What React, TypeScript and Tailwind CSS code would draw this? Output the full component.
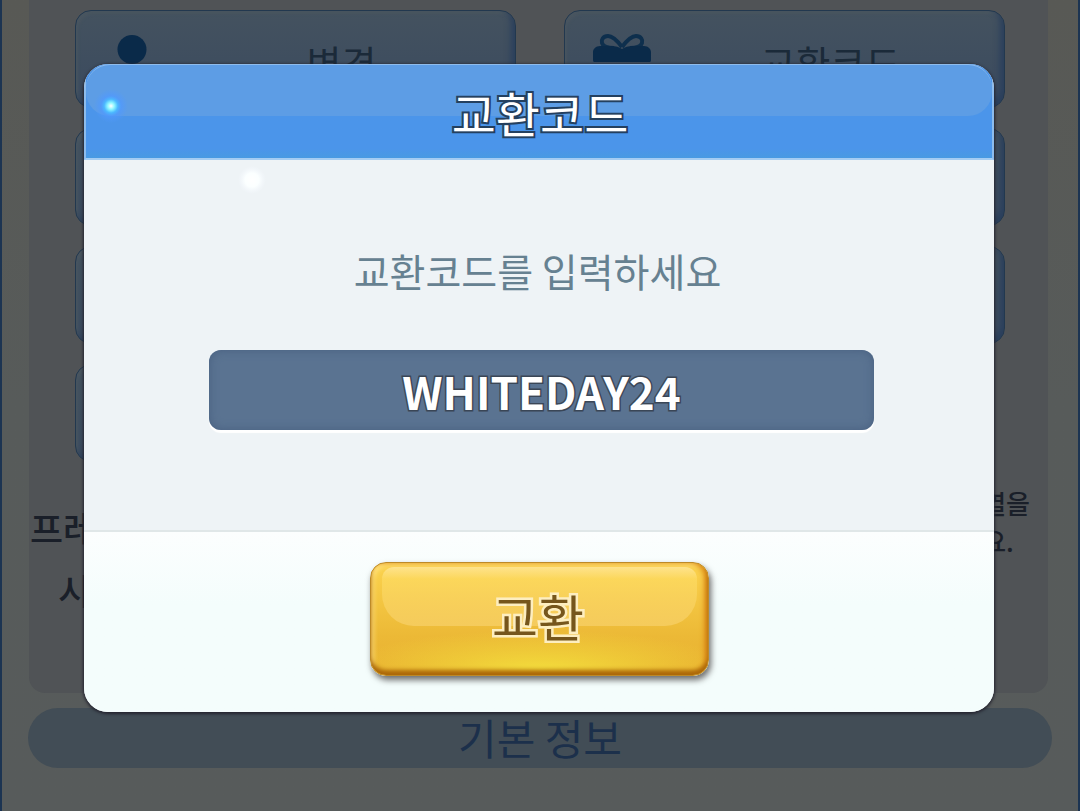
import { useState } from "react";

const FONT = "font-['Noto_Sans_CJK_KR',sans-serif]";

const UserIcon = () => (
  <svg viewBox="0 0 60 64" className="h-16 w-[60px] fill-[#0a2a49]">
    <circle cx="30" cy="14.5" r="14.5" />
    <path d="M4 64V56c0-12 10-20 26-20s26 8 26 20v8z" />
  </svg>
);

const GiftIcon = () => (
  <svg viewBox="0 0 60 64" className="h-16 w-[60px] overflow-visible">
    <g fill="none" stroke="#0e2f4d" strokeWidth="4">
      <path d="M31 12C25 4 21 1 17 1c-5 0-7 4-6 7 1 4 6 5 12 5" />
      <path d="M31 12C37 4 41 1 45 1c5 0 7 4 6 7-1 4-6 5-12 5" />
    </g>
    <path
      d="M2 25V17c0-3 3-6 7-6h11c5 0 8 1 11 3 3-2 6-3 11-3h11c4 0 7 3 7 6v8c0 2-1 2-2 2H4c-1 0-2 0-2-2z"
      fill="#0a2a49"
    />
    <path d="M6 32h50v28H6z" fill="#0a2a49" />
  </svg>
);

type MenuItem = { label: string; icon?: React.ReactNode };

const leftMenu: MenuItem[] = [
  { label: "변경", icon: <UserIcon /> },
  { label: "" },
  { label: "" },
  { label: "" },
];

const rightMenu: MenuItem[] = [
  { label: "교환코드", icon: <GiftIcon /> },
  { label: "" },
  { label: "" },
];

const MenuButton = ({ label, icon }: MenuItem) => (
  <button
    type="button"
    className="flex h-[98px] w-full items-start rounded-2xl border border-[#22384f] bg-linear-to-b from-[#44525f] to-[#3a4a5f] px-[26px] pt-6 shadow-[inset_-4px_-4px_6px_#2a3f5c,inset_2px_3px_3px_#4b5760]"
  >
    <span className="w-[60px]">{icon}</span>
    <span className="flex-1 pt-1 pl-8 text-center text-[38px] leading-[46px] text-[#1b2a39]">
      {label}
    </span>
  </button>
);

const MenuColumn = ({ items }: { items: MenuItem[] }) => (
  <div className="flex flex-1 flex-col gap-5">
    {items.map((item, index) => (
      <MenuButton key={index} {...item} />
    ))}
  </div>
);

const SettingsPage = () => (
  <main className="min-h-screen border-x-2 border-[#1c3452] bg-linear-to-b from-[#585955] via-[#575b5a] to-[#575b5b] px-[26px]">
    <section className="mr-1 ml-px flex h-[693px] flex-col rounded-b-2xl bg-[#505356] pt-[10px]">
      <div className="flex gap-12 pr-[43px] pl-[46px]">
        <MenuColumn items={leftMenu} />
        <MenuColumn items={rightMenu} />
      </div>
      <div className="flex justify-between pt-[22px] pr-[18px] pl-px text-[#1a1f29]">
        <div className="pt-3 text-4xl font-medium">
          <p className="leading-[62px]">프레</p>
          <p className="pl-7 leading-[62px]">시</p>
        </div>
        <div className="text-[26px] leading-[38px] font-medium">
          <p>열을</p>
          <p>요.</p>
        </div>
      </div>
    </section>
    <h2 className="mt-[15px] rounded-full bg-[#424d56] pb-0.5 text-center text-[42px] leading-[58px] text-[#1c304b]">
      기본 정보
    </h2>
  </main>
);

const Sparkles = () => (
  <svg
    viewBox="0 0 200 140"
    className="pointer-events-none absolute top-0 left-0 h-[140px] w-[200px]"
    aria-hidden="true"
  >
    <defs>
      <radialGradient id="blueGlow">
        <stop offset="0" stopColor="#ffffff" />
        <stop offset="0.2" stopColor="#8df6ff" />
        <stop offset="0.4" stopColor="#4cb8ff" />
        <stop offset="0.6" stopColor="#5099ff" stopOpacity="0.7" />
        <stop offset="1" stopColor="#5099ff" stopOpacity="0" />
      </radialGradient>
      <radialGradient id="whiteGlow">
        <stop offset="0" stopColor="#ffffff" />
        <stop offset="0.5" stopColor="#fbffff" />
        <stop offset="1" stopColor="#f4f8ff" stopOpacity="0" />
      </radialGradient>
    </defs>
    <circle cx="27" cy="42" r="17" fill="url(#blueGlow)" />
    <circle cx="168" cy="116" r="14" fill="url(#whiteGlow)" />
  </svg>
);

const CodeDialog = () => {
  const [code, setCode] = useState<string>("WHITEDAY24");

  return (
    <form
      role="dialog"
      aria-labelledby="dialogTitle"
      onSubmit={(e) => e.preventDefault()}
      className="relative w-full overflow-hidden rounded-3xl bg-[#eef3f6] shadow-[0_1px_3px_1px_#24242f]"
    >
      <header className="relative border-x-2 border-b-2 border-x-[#8dbcec] border-b-[#a4cdf2] bg-linear-to-b from-[#4b95ea] from-90% to-[#489ae2]">
        <div className="absolute inset-x-0 top-0 h-[52px] rounded-t-3xl rounded-b-3xl border-t border-[#8fbcec] bg-[#5d9de5]" />
        <h1
          id="dialogTitle"
          className="relative pt-0.5 pl-0.5 text-center text-5xl leading-[92px] text-white [-webkit-text-stroke:4px_#24405f] [paint-order:stroke_fill]"
        >
          교환코드
        </h1>
      </header>
      <div className="flex flex-col pt-[82px] pr-[120px] pb-[100px] pl-[125px]">
        <label
          htmlFor="code"
          className="pr-2 text-center text-[39px] leading-[56px] text-[#668191]"
        >
          교환코드를 입력하세요
        </label>
        <input
          id="code"
          type="text"
          value={code}
          onChange={(e) => setCode(e.target.value)}
          className="mt-[52px] h-20 w-full rounded-xl bg-[#5a7391] pt-0.5 text-center text-[44px] font-bold text-white shadow-[inset_0_0_10px_#486080,0_3px_1px_#ffffff] outline-none [-webkit-text-stroke:3px_#3a4656] [paint-order:stroke_fill]"
        />
      </div>
      <footer className="flex justify-center border-t-2 border-[#e0e7e8] bg-linear-to-b from-[#fcfefe] to-[#f4fdfc] to-40% pt-[30px] pb-9">
        <button
          type="submit"
          className="relative h-[114px] w-[339px] overflow-hidden rounded-2xl border border-[#bd8a28] bg-[radial-gradient(ellipse_60%_35%_at_50%_95%,#f3dc3c,transparent),linear-gradient(#fbd34f,#ecb936_65%,#e8ae30)] pr-0.5 pb-2 shadow-[inset_0_-5px_4px_#ac6809,inset_-4px_0_5px_#dd8d18,inset_3px_3px_4px_#ffe078,2px_4px_6px_#6b6b6b]"
        >
          <span className="absolute inset-x-[11px] top-1 h-[59px] rounded-t-xl rounded-b-[32px] bg-linear-to-b from-[#ffe79a]/80 via-[#fddb62]/70 via-20% to-[#f5cb5c]" />
          <span className="relative text-[50px] leading-[100px] text-[#76561c] [-webkit-text-stroke:5px_#fdeec0] [paint-order:stroke_fill]">
            교환
          </span>
        </button>
      </footer>
      <Sparkles />
    </form>
  );
};

const App = () => (
  <div className={`${FONT} relative`}>
    <SettingsPage />
    <div className="absolute inset-0 flex items-start justify-center pt-16 pr-[86px] pl-[84px]">
      <CodeDialog />
    </div>
  </div>
);

export default App;
